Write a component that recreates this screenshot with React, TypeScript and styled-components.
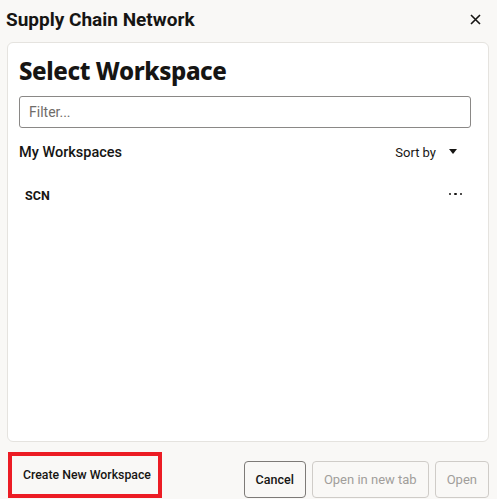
import React from 'react';
import styled, { createGlobalStyle } from 'styled-components';

const GlobalStyle = createGlobalStyle`
  html, body {
    margin: 0;
    padding: 0;
    background: #f9f8f6;
  }
  body {
    font-family: Roboto, "Noto Sans", sans-serif;
    color: #161513;
  }
`;

const Dialog = styled.div`
  width: 497px;
  height: 499px;
  display: flex;
  flex-direction: column;
  box-sizing: border-box;
`;

const Header = styled.div`
  height: 42px;
  display: flex;
  align-items: center;
  justify-content: space-between;
  padding: 0 14px 0 6px;
  box-sizing: border-box;
`;

const DialogTitle = styled.h1`
  margin: 0;
  margin-top: -3px;
  font-size: 19px;
  font-weight: 700;
`;

const CloseButton = styled.button`
  border: none;
  background: none;
  padding: 0;
  width: 16px;
  height: 16px;
  display: flex;
  align-items: center;
  justify-content: center;
  margin-top: -3px;
  cursor: pointer;
`;

const Card = styled.div`
  flex: 1;
  margin: 0 8px 0 7px;
  background: #fff;
  border: 1px solid #e5e3df;
  border-radius: 6px;
  padding: 12px 17px 0 11px;
  display: flex;
  flex-direction: column;
`;

const Heading = styled.h2`
  margin: 0;
  font-family: "Noto Sans", Roboto, sans-serif;
  font-size: 24px;
  line-height: 32px;
  font-weight: 800;
  letter-spacing: -0.4px;
`;

const FilterInput = styled.input`
  margin-top: 9px;
  height: 32px;
  box-sizing: border-box;
  border: 1px solid #8a8886;
  border-radius: 3px;
  padding: 0 9px;
  font-family: inherit;
  font-size: 14px;
  color: #161513;
  outline: none;
  &::placeholder {
    color: #6f6c69;
  }
`;

const ListHeader = styled.div`
  margin-top: 12px;
  height: 24px;
  display: flex;
  align-items: center;
  justify-content: space-between;
`;

const ListLabel = styled.span`
  font-size: 14.5px;
  font-weight: 500;
`;

const SortButton = styled.button`
  border: none;
  background: none;
  padding: 0;
  display: flex;
  align-items: center;
  gap: 13px;
  font-family: inherit;
  font-size: 13px;
  color: #161513;
  margin-right: 14px;
`;

const Caret = styled.span`
  width: 0;
  height: 0;
  border-left: 4px solid transparent;
  border-right: 4px solid transparent;
  border-top: 5px solid #161513;
  margin-top: -2px;
`;

const WorkspaceRow = styled.div`
  margin-top: 19px;
  height: 24px;
  display: flex;
  align-items: center;
  justify-content: space-between;
  padding: 0 9px 0 6px;
`;

const WorkspaceName = styled.span`
  font-size: 12.5px;
  font-weight: 700;
`;

const Dots = styled.span`
  display: flex;
  gap: 3px;
  margin-top: -2px;
`;

const Dot = styled.span`
  width: 2.5px;
  height: 2.5px;
  border-radius: 50%;
  background: #161513;
`;

const Footer = styled.div`
  height: 57px;
  display: flex;
  align-items: flex-end;
  padding: 0 8px 1px 8px;
  box-sizing: border-box;
`;

const Highlight = styled.div`
  width: 154px;
  height: 46px;
  box-sizing: border-box;
  border: 4px solid #ec1c24;
  display: flex;
  align-items: center;
  padding: 0 0 0 10px;
`;

const Spacer = styled.div`
  flex: 1;
`;

const Actions = styled.div`
  display: flex;
  gap: 6px;
`;

const Button = styled.button<{ $disabled?: boolean; $bare?: boolean }>`
  height: 37px;
  box-sizing: border-box;
  padding: ${p => (p.$bare ? '0' : p.$disabled ? '0 11px' : '0 11px')};
  border-radius: 4px;
  border: 1px solid ${p => (p.$bare ? 'transparent' : p.$disabled ? '#cfccc8' : '#7d7a77')};
  background: ${p => (p.$bare ? 'transparent' : '#f9f8f6')};
  color: ${p => (p.$disabled ? '#a19e9b' : '#161513')};
  font-family: inherit;
  font-size: ${p => (p.$bare ? '12.3px' : p.$disabled ? '13px' : '12.5px')};
  font-weight: ${p => (p.$disabled ? 400 : 500)};
  cursor: ${p => (p.$disabled ? 'default' : 'pointer')};
  white-space: nowrap;
`;

const App: React.FC = () => (
  <>
    <GlobalStyle />
    <Dialog>
      <Header>
        <DialogTitle>Supply Chain Network</DialogTitle>
        <CloseButton aria-label="Close">
          <svg width="11" height="11" viewBox="0 0 11 11">
            <path d="M1 1 L10 10 M10 1 L1 10" stroke="#161513" strokeWidth="1.6" />
          </svg>
        </CloseButton>
      </Header>
      <Card>
        <Heading>Select Workspace</Heading>
        <FilterInput placeholder="Filter..." />
        <ListHeader>
          <ListLabel>My Workspaces</ListLabel>
          <SortButton>
            Sort by <Caret />
          </SortButton>
        </ListHeader>
        <WorkspaceRow>
          <WorkspaceName>SCN</WorkspaceName>
          <Dots>
            <Dot />
            <Dot />
            <Dot />
          </Dots>
        </WorkspaceRow>
      </Card>
      <Footer>
        <Highlight>
          <Button $bare>Create New Workspace</Button>
        </Highlight>
        <Spacer />
        <Actions>
          <Button>Cancel</Button>
          <Button $disabled>Open in new tab</Button>
          <Button $disabled>Open</Button>
        </Actions>
      </Footer>
    </Dialog>
  </>
);

export default App;
